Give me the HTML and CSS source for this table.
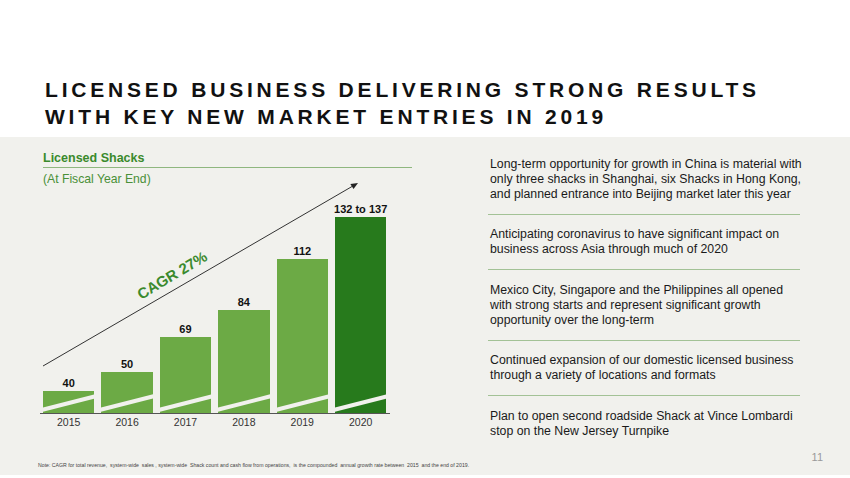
FILE: index.html
```html
<!DOCTYPE html>
<html lang="en">
<head>
<meta charset="utf-8">
<title>Licensed Business</title>
<link rel="stylesheet" href="styles.css">
</head>
<body>
<div class="slide">
  <header class="head">
    <h1 class="title">LICENSED BUSINESS DELIVERING STRONG RESULTS<br>WITH KEY NEW MARKET ENTRIES IN 2019</h1>
  </header>
  <section class="band">
    <div class="main">
      <div class="left">
        <div class="chart-title">Licensed Shacks</div>
        <div class="chart-sub">(At Fiscal Year End)</div>
        <div class="plot">
          <div class="col"><span class="val">40</span><div class="bar" style="height:22px"></div></div>
          <div class="col"><span class="val">50</span><div class="bar" style="height:41px"></div></div>
          <div class="col"><span class="val">69</span><div class="bar" style="height:76px"></div></div>
          <div class="col"><span class="val">84</span><div class="bar" style="height:103px"></div></div>
          <div class="col"><span class="val">112</span><div class="bar" style="height:154px"></div></div>
          <div class="col"><span class="val">132 to 137</span><div class="bar bar-dark" style="height:196px"></div></div>
        </div>
        <div class="years">
          <span>2015</span><span>2016</span><span>2017</span><span>2018</span><span>2019</span><span>2020</span>
        </div>
        <svg class="trend" width="372" height="300" viewBox="0 0 372 300">
          <line x1="3" y1="229" x2="312" y2="49.5" stroke="#333" stroke-width="1"/>
          <polygon points="318,46 313.5,52.1 310.4,46.9" fill="#222"/>
        </svg>
        <div class="cagr">CAGR 27%</div>
      </div>
      <ul class="points">
        <li>Long-term opportunity for growth in China is material with<br>only three shacks in Shanghai, six Shacks in Hong Kong,<br>and planned entrance into Beijing market later this year</li>
        <li>Anticipating coronavirus to have significant impact on<br>business across Asia through much of 2020</li>
        <li>Mexico City, Singapore and the Philippines all opened<br>with strong starts and represent significant growth<br>opportunity over the long-term</li>
        <li>Continued expansion of our domestic licensed business<br>through a variety of locations and formats</li>
        <li>Plan to open second roadside Shack at Vince Lombardi<br>stop on the New Jersey Turnpike</li>
      </ul>
    </div>
    <footer class="foot">
      <p class="note">Note: CAGR for total revenue, &nbsp;system-wide &nbsp;sales , system-wide &nbsp;Shack count and cash flow from operations, &nbsp;is the compounded &nbsp;annual growth rate between &nbsp;2015 &nbsp;and the end of 2019.</p>
      <span class="page">11</span>
    </footer>
  </section>
</div>
</body>
</html>
```
FILE: styles.css
```css
* { box-sizing: border-box; }
html, body { margin: 0; padding: 0; background: #ffffff; }
body { font-family: "Liberation Sans", Arial, sans-serif; color: #1a1a1a; }

.slide { width: 850px; height: 478px; overflow: hidden; background: #ffffff; }

.head { height: 137px; padding: 76px 0 0 45px; }
.title {
  margin: 0;
  font-size: 21px;
  line-height: 27px;
  font-weight: bold;
  letter-spacing: 3.8px;
  color: #111111;
}

.band {
  height: 338px;
  background: #f1f1ed;
  display: flex;
  flex-direction: column;
}
.main { flex: 1; display: flex; }

.left {
  position: relative;
  margin-left: 40px;
  width: 372px;
  padding-top: 13.5px;
}
.chart-title {
  margin-left: 3px;
  font-size: 12.5px;
  line-height: 15px;
  font-weight: bold;
  color: #3a8a2c;
  padding-bottom: 1.5px;
  border-bottom: 1.5px solid #8fb77f;
}
.chart-sub {
  margin: 4px 0 0 3px;
  font-size: 12.2px;
  line-height: 15px;
  color: #4a9038;
}

.plot {
  width: 350px;
  height: 227px;
  padding: 0 3px;
  display: flex;
  align-items: flex-end;
  gap: 7px;
  border-bottom: 1px solid #555555;
}
.col {
  width: 51.4px;
  display: flex;
  flex-direction: column;
  align-items: center;
}
.val {
  font-size: 11px;
  line-height: 13px;
  font-weight: bold;
  color: #111111;
  margin-bottom: 1.5px;
  white-space: nowrap;
}
.bar {
  position: relative;
  width: 100%;
  background: #6caa45;
  overflow: hidden;
}
.bar-dark { background: #277a1c; }
.bar::after {
  content: "";
  position: absolute;
  left: -4px;
  width: 60px;
  height: 3.5px;
  bottom: 8.8px;
  background: #f1f1ed;
  transform: rotate(-14.3deg);
}

.years {
  width: 350px;
  padding: 0 3px;
  display: flex;
  gap: 7px;
  margin-top: 1px;
}
.years span {
  width: 51.4px;
  text-align: center;
  font-size: 10.5px;
  line-height: 14px;
  color: #333333;
}

.trend { position: absolute; left: 0; top: 0; }
.cagr {
  position: absolute;
  left: 132px;
  top: 138px;
  transform: translate(-50%, -50%) rotate(-31deg);
  font-size: 15px;
  font-weight: bold;
  color: #3b8a2e;
  white-space: nowrap;
}

.points {
  list-style: none;
  margin: 0 0 0 76px;
  padding: 7px 0 0 0;
  width: 312px;
}
.points li {
  padding: 12.5px 0 12px 2px;
  font-size: 12.3px;
  line-height: 15px;
  color: #1a1a1a;
  white-space: nowrap;
  border-bottom: 1px solid #a3c296;
}
.points li:last-child { border-bottom: none; }

.foot {
  display: flex;
  justify-content: space-between;
  align-items: flex-end;
  padding: 0 27px 6.5px 38px;
}
.note {
  margin: 0;
  font-size: 5.2px;
  line-height: 7px;
  color: #444444;
  white-space: nowrap;
}
.page {
  font-size: 11px;
  line-height: 13px;
  color: #9a9a9a;
  margin-bottom: 5px;
}
```
